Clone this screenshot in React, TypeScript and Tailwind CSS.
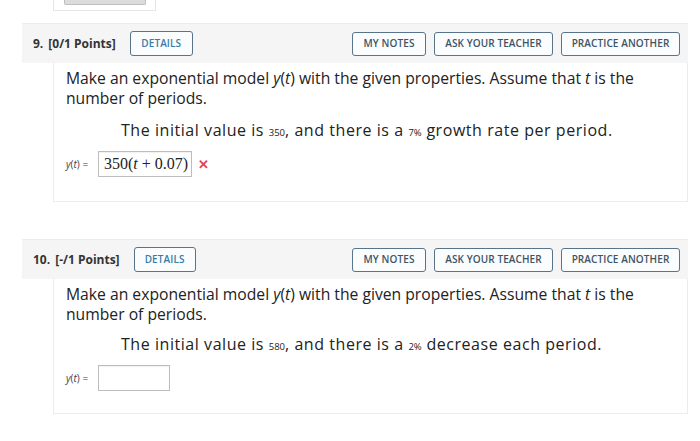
import type { ReactNode } from 'react';

type QuestionProps = {
  num: string;
  points: string;
  detailsWidth: string;
  bodyClass: string;
  children: ReactNode;
};

function HeaderButton({ label, className }: { label: string; className: string }) {
  return (
    <button
      className={`h-[24px] rounded-[3px] border-[1.5px] border-[#58748a] bg-[#fbfcfd] text-[10px] font-semibold tracking-[0.1px] ${className}`}
    >
      {label}
    </button>
  );
}

function Question({ num, points, detailsWidth, bodyClass, children }: QuestionProps) {
  return (
    <div className="ml-[22px] w-[666px]">
      {/* header bar */}
      <div className="flex h-[40px] items-center border-t border-[#ededed] bg-[#f5f5f5] pl-[11px] pr-[8px]">
        <span className="text-[12px] font-bold text-[#333]">{num}</span>
        <span className="ml-[5px] text-[12px] font-bold text-[#333]">{points}</span>
        <HeaderButton label="DETAILS" className={`ml-[14px] h-[25px] text-[#3a7ca5] ${detailsWidth}`} />
        <div className="ml-auto flex gap-[8px]">
          <HeaderButton label="MY NOTES" className="w-[74px] text-[#3d5466]" />
          <HeaderButton label="ASK YOUR TEACHER" className="w-[119px] text-[#3d5466]" />
          <HeaderButton label="PRACTICE ANOTHER" className="w-[119px] text-[#3d5466]" />
        </div>
      </div>
      {/* body */}
      <div className={`ml-[31px] border-x border-b border-[#ececec] bg-white pl-[12px] pt-[5px] ${bodyClass}`}>
        {children}
      </div>
    </div>
  );
}

function Prompt() {
  return (
    <p className="text-[15.7px] leading-[20px] text-[#222]">
      Make an exponential model <i>y</i>(<i>t</i>) with the given properties. Assume that <i>t</i> is the
      <br />
      number of periods.
    </p>
  );
}

function Small({ children }: { children: ReactNode }) {
  return <span className="text-[9.5px] tracking-normal">{children}</span>;
}

export default function App() {
  return (
    <div className="h-[441px] w-[700px] overflow-hidden bg-white font-['Open_Sans',sans-serif]">
      {/* end of the previous question */}
      <div className="ml-[53px] h-[11px] w-[103px] border-x border-b border-[#e6e6e6] pl-[10px]">
        <div className="h-[5px] w-[82px] rounded-b-[2px] border border-t-0 border-[#bdbdbd] bg-[#dcdcdc]" />
      </div>

      <div className="mt-[12px]">
        <Question num="9." points="[0/1 Points]" detailsWidth="w-[63px]" bodyClass="h-[139px]">
          <Prompt />
          <p className="ml-[55px] mt-[12px] text-[16px] leading-[20px] tracking-[0.55px] text-[#222]">
            The initial value is <Small>350</Small>, and there is a <Small>7%</Small> growth rate per period.
          </p>
          <div className="mt-[8px] flex items-center">
            <span className="w-[32px] text-[10px] text-[#444]">
              <i>y</i>(<i>t</i>) =
            </span>
            <div className="flex h-[26px] w-[94px] items-center border border-[#bdbdbd] pl-[5px] font-['Liberation_Serif',serif] text-[16px] text-[#222] shadow-[inset_0_1px_1px_rgba(0,0,0,0.06)]">
              350(<i>t</i>&nbsp;+&nbsp;0.07)
            </div>
            <span className="ml-[6px] text-[13px] font-bold leading-none text-[#e0474c]">✕</span>
          </div>
        </Question>
      </div>

      <div className="mt-[37px]">
        <Question num="10." points="[-/1 Points]" detailsWidth="w-[62px]" bodyClass="h-[135px]">
          <Prompt />
          <p className="ml-[55px] mt-[10px] text-[16px] leading-[20px] tracking-[0.55px] text-[#222]">
            The initial value is <Small>580</Small>, and there is a <Small>2%</Small> decrease each period.
          </p>
          <div className="mt-[8px] flex items-center">
            <span className="w-[32px] text-[10px] text-[#444]">
              <i>y</i>(<i>t</i>) =
            </span>
            <div className="h-[26px] w-[72px] border border-[#bdbdbd] shadow-[inset_0_1px_1px_rgba(0,0,0,0.06)]" />
          </div>
        </Question>
      </div>
    </div>
  );
}
